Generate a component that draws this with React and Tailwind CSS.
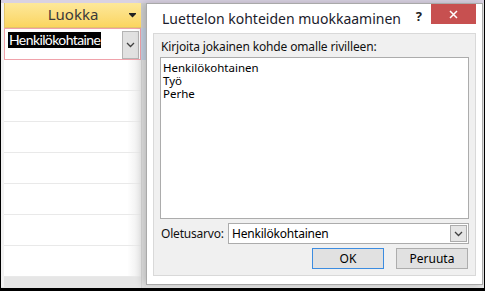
import React from 'react';

const Chevron = ({ className = '' }) => (
	<svg className={className} width="9" height="6" viewBox="0 0 9 6" fill="none">
		<path d="M1 1l3.5 3.5L8 1" stroke="#404040" strokeWidth="1.3" />
	</svg>
);

const Sheet = () => {
	const rows = [0, 1, 2, 3, 4, 5, 6];
	return (
		<div className="flex w-[145px] shrink-0 h-full">
			<div className="w-[3px] h-full bg-[#f2f2f2] border-b border-[#e4e4e4]"></div>
			<div className="w-[137px] flex flex-col">
				<div className="h-[25px] shrink-0 relative flex items-center justify-center bg-gradient-to-b from-[#fde89a] to-[#fbd55e] border-l border-[#c8c8c8] border-b border-[#e3c56a]">
					<span className="text-[15px] text-[#3a3a3a] font-['Noto_Sans',sans-serif] leading-none pb-[2px]">Luokka</span>
					<svg className="absolute right-[5px] top-[10px]" width="7" height="5" viewBox="0 0 7 5">
						<rect x="0" y="0" width="7" height="1" fill="#222" />
						<path d="M0 1h7L3.5 4.5z" fill="#222" />
					</svg>
				</div>
				<div className="h-[32px] shrink-0 border border-[#f0a2ab] flex items-start justify-between pl-[3px] pr-[1px] pt-[2px] bg-white">
					<span className="bg-black text-white text-[14px] leading-[16px] font-['Lato',sans-serif] tracking-[-0.6px] px-[1px] mt-[1px]">Henkilökohtaine</span>
					<div className="w-[17px] h-[28px] bg-[#e1e1e1] border border-[#b4b4b4] flex items-center justify-center">
						<Chevron />
					</div>
				</div>
				{rows.map((r) => (
					<div key={r} className="h-[31px] shrink-0 border-b border-[#e9e9e9] bg-gradient-to-r from-white from-[90%] to-[#ececec]"></div>
				))}
			</div>
			<div className="w-[5px] flex flex-col">
				<div className="h-[25px] bg-[#d2d2d2]"></div>
				<div className="h-[32px] bg-[#c6d3e3]"></div>
				<div className="flex-1 bg-[#e3e3e3] border-l border-[#d6d6d6]"></div>
			</div>
		</div>
	);
};

const Dialog = () => (
	<div className="w-[337px] h-[282px] shrink-0 bg-white border border-[#a9a9a9] flex flex-col shadow-[-3px_0_8px_rgba(0,0,0,0.18)] font-['Noto_Sans',sans-serif]">
		<div className="h-[29px] shrink-0 flex items-start">
			<div className="pl-[15px] pt-[5px] text-[14px] leading-[20px] text-[#1b1b2b] flex-1">Luettelon kohteiden muokkaaminen</div>
			<div className="pt-[3px] text-[13px] font-bold text-[#222] mr-[9px]">?</div>
			<div className="w-[45px] h-[20px] bg-[#c75050] flex items-center justify-center mr-[6px]">
				<svg width="9" height="9" viewBox="0 0 9 9">
					<path d="M1 1l7 7M8 1L1 8" stroke="white" strokeWidth="1.5" />
				</svg>
			</div>
		</div>
		<div className="flex-1 mx-[6px] mb-[8px] bg-[#f0f0f0] border border-[#d9d9d9] flex flex-col px-[6px]">
			<div className="pt-[5px] pl-[1px] text-[12px] leading-[16px] text-[#111] tracking-[-0.15px]">Kirjoita jokainen kohde omalle rivilleen:</div>
			<div className="mt-[2px] h-[162px] bg-white border border-[#acacac] px-[2px] pt-[3px] text-[11.5px] leading-[13px] text-black">
				<div>Henkilökohtainen</div>
				<div>Työ</div>
				<div>Perhe</div>
			</div>
			<div className="mt-[4px] flex items-center">
				<div className="w-[68px] pl-[1px] text-[12px] text-[#111] tracking-[-0.2px]">Oletusarvo:</div>
				<div className="flex-1 h-[21px] bg-white border border-[#acacac] flex items-center justify-between pl-[3px] pr-[1px]">
					<span className="text-[12px] text-black tracking-[-0.2px]">Henkilökohtainen</span>
					<div className="w-[17px] h-[17px] bg-[#e5e5e5] border border-[#acacac] flex items-center justify-center">
						<Chevron />
					</div>
				</div>
			</div>
			<div className="mt-[4px] flex justify-end gap-[12px] pr-[1px]">
				<button className="w-[72px] h-[21px] bg-[#e1e1e1] border border-[#3c8ce0] text-[12px] text-black leading-none">OK</button>
				<button className="w-[72px] h-[21px] bg-[#e1e1e1] border border-[#adadad] text-[12px] text-black leading-none">Peruuta</button>
			</div>
		</div>
	</div>
);

export default function App() {
	return (
		<div className="w-[485px] h-[291px] bg-[#e6e6e6] border-l border-r border-b-[3px] border-black flex flex-col overflow-hidden">
			<div className="h-[3px] shrink-0 bg-[#d9d2e2]"></div>
			<div className="flex flex-1">
				<Sheet />
				<Dialog />
			</div>
		</div>
	);
}
